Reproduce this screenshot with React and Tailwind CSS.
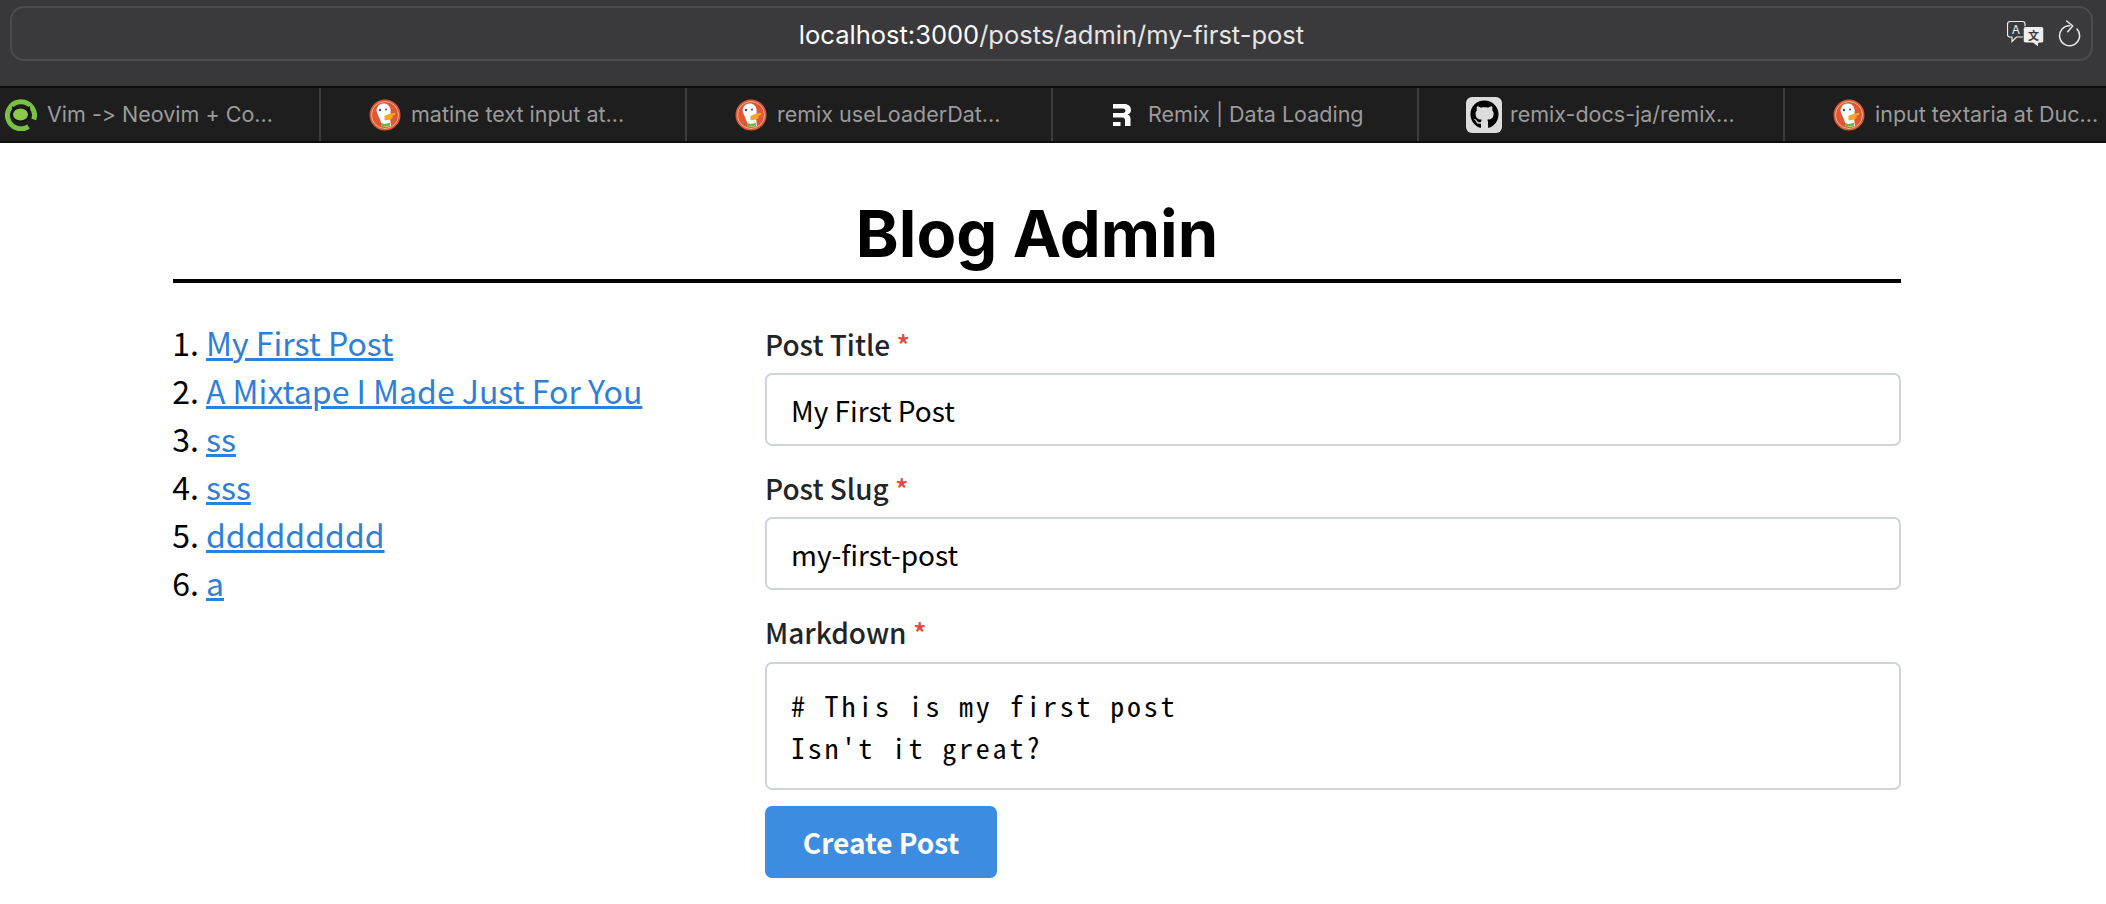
import { FaGithub } from "react-icons/fa";

const tabs = [
  { icon: "vim", text: "Vim -> Neovim + Co...", cls: "pl-[50px] gap-[10px]" },
  { icon: "duck", text: "matine text input at...", cls: "pl-[48px] gap-[10px]" },
  { icon: "duck", text: "remix useLoaderDat...", cls: "pl-[48px] gap-[10px]" },
  { icon: "remix", text: "Remix | Data Loading", cls: "pl-[60px] gap-[17px]" },
  { icon: "github", text: "remix-docs-ja/remix...", cls: "pl-[47px] gap-[8px]" },
  { icon: "duck", text: "input textaria at Duc...", cls: "pl-[48px] gap-[10px]" },
];

const posts = ["My First Post", "A Mixtape I Made Just For You", "ss", "sss", "ddddddddd", "a"];

function DuckIcon() {
  return (
    <svg width="32" height="32" viewBox="0 0 32 32" className="shrink-0">
      <circle cx="16" cy="16" r="15.5" fill="#de5833" />
      <circle cx="16" cy="16" r="13.500" fill="none" stroke="#f2b8a3" strokeWidth="0.9" />
      <path d="M8 9c1.500-3.500 4-4.500 7-4.500 3.500 0 6 2.500 6.500 6 .5 4-.5 6-.5 9l1 7.500c-2 .8-6 .8-8.500 0-1-3-2.500-6-3.800-9.500C8 14 7 12 8 9z" fill="#fff" />
      <circle cx="11" cy="11" r="1.200" fill="#2d4f8e" />
      <circle cx="17" cy="10.500" r="1" fill="#2d4f8e" />
      <path d="M15.500 17c3-1.500 8-3.500 11-3 .5 1.500-1.500 2.500-3.500 3 1 .5 1 1.500 0 2.500-2.500 1.500-6 2-7.500 1.500z" fill="#f5a623" />
      <path d="M12 24l4 1 5-1.200v4l-5-.8-4 1z" fill="#65bc46" />
    </svg>
  );
}

function VimIcon() {
  return (
    <svg width="32" height="32" viewBox="0 0 32 32" className="shrink-0">
      <path d="M23.500 27.500A13.500 13.500 0 1 1 28.800 20.500" fill="none" stroke="#7ac143" strokeWidth="5" />
      <path d="M7 7l4 2.500c3-1 7-1 10 0l4-2.500v8c0 5-4 8-9 8s-9-3-9-8z" fill="#111" />
      <ellipse cx="15.500" cy="15.500" rx="7.500" ry="6" fill="#8cc84b" />
    </svg>
  );
}

function RemixIcon() {
  return (
    <svg width="18" height="22" viewBox="0 0 18 22" className="shrink-0">
      <path d="M0 0H11C15.500 0 18 2.500 18 6C18 8.500 16.500 10 14.500 10.500C16.500 11 17.500 12.500 17.500 15V22H12V16C12 14.500 11 13.500 9.500 13.500H0V9H10C11.500 9 12.500 8 12.500 6.800C12.500 5.500 11.500 4.500 10 4.500H0Z" fill="#fff" />
      <path d="M0 18H7.500V22H0Z" fill="#fff" />
    </svg>
  );
}

function GithubIcon() {
  return (
    <div className="flex h-[36px] w-[36px] shrink-0 items-center justify-center rounded-[6px] bg-[#dcdcdc]">
      <FaGithub size={29} color="#000" />
    </div>
  );
}

function TabIcon({ name }) {
  if (name === "vim") return <VimIcon />;
  if (name === "duck") return <DuckIcon />;
  if (name === "remix") return <RemixIcon />;
  return <GithubIcon />;
}

function TranslateIcon() {
  return (
    <svg width="38" height="28" viewBox="0 0 38 28" className="shrink-0">
      <path d="M3 1.500h12.500c1.500 0 2.500 1 2.500 2.500v10.500c0 1.500-1 2.500-2.500 2.500H9.500L5 21.500V17H3c-1.500 0-2.500-1-2.500-2.500V4C.5 2.500 1.500 1.500 3 1.500z" fill="#3a3a3c" stroke="#eee" strokeWidth="1.200" />
      <text x="9" y="13.500" fontSize="12" fill="#eee" textAnchor="middle" fontFamily="Inter, sans-serif">A</text>
      <path d="M19 6.500h15c1.800 0 2.800 1 2.800 2.800v11c0 1.800-1 2.800-2.800 2.800h-2.500v4.200L26 23H19c-1.800 0-2.800-1-2.800-2.800v-11c0-1.800 1-2.700 2.800-2.700z" fill="#eee" stroke="#3a3a3c" strokeWidth="1" />
      <text x="26.500" y="19.500" fontSize="11" fontWeight="700" fill="#3a3a3c" textAnchor="middle" fontFamily="Noto Sans CJK SC, sans-serif">文</text>
    </svg>
  );
}

function ReloadIcon() {
  return (
    <svg width="24" height="28" viewBox="0 0 24 28" fill="none" stroke="#e8e8e8" strokeWidth="1.500" strokeLinecap="round" strokeLinejoin="round" className="shrink-0">
      <path d="M19 9A10 10 0 1 1 11.700 5.700" />
      <path d="M8.700 1l6 5-5 5.700" />
    </svg>
  );
}

function Label({ children }) {
  return (
    <label className="block text-[28px] leading-[44px] font-medium text-[#212529]">
      {children} <span className="text-[#e5483f]">*</span>
    </label>
  );
}

export default function App() {
  return (
    <div className="min-h-screen overflow-hidden bg-white font-['Noto_Sans_CJK_JP','Noto_Sans',sans-serif] text-black">
      {/* browser toolbar */}
      <div className="h-[86px] bg-[#38383a] pl-[10px] pr-[13px] pt-[6px]">
        <div className="relative flex h-[55px] items-center justify-center rounded-[14px] border-2 border-[#4c4c4e] bg-[#3a3a3c]">
          <span className="pt-[4px] font-['Inter',sans-serif] text-[25.500px] text-[#e6e6e6]">
            <span className="text-white">localhost:3000</span>/posts/admin/my-first-post
          </span>
          <div className="absolute right-[9px] top-[12px] flex items-start gap-[13px]">
            <TranslateIcon />
            <ReloadIcon />
          </div>
        </div>
      </div>

      {/* tab strip */}
      <div className="h-[57px] overflow-hidden border-y-2 border-y-[#0d0d0d] bg-[#1e1e1e]">
        <div className="-ml-[45px] flex h-full w-[2400px]">
          {tabs.map((tab, i) => (
            <div
              key={i}
              className={`flex h-full w-[366px] shrink-0 items-center border-r-2 border-r-[#3c3c3c] font-['Inter',sans-serif] text-[21.500px] text-[#9b9b9b] [font-variant-ligatures:none] [font-feature-settings:'calt'_0] ${tab.cls}`}
            >
              <TabIcon name={tab.icon} />
              <span className="whitespace-nowrap">{tab.text}</span>
            </div>
          ))}
        </div>
      </div>

      {/* page */}
      <div className="ml-[173px] w-[1728px] pt-[47px]">
        <h1 className="border-b-4 border-b-black pb-[2px] text-center font-['Inter',sans-serif] text-[65px] leading-[87px] font-bold">
          Blog Admin
        </h1>

        <div className="mt-[35px] flex">
          <ol className="w-[592px] shrink-0 list-decimal pl-[33px] text-[32px] leading-[48px]">
            {posts.map((post) => (
              <li key={post}>
                <a className="text-[#2f7fd6] underline" href="#">{post}</a>
              </li>
            ))}
          </ol>

          <div className="flex-1 pt-[4px]">
            <Label>Post Title</Label>
            <input readOnly value="My First Post" className="mt-[7px] block h-[73px] w-full rounded-[7px] border-2 border-[#ced4da] px-[24px] text-[28px] text-black" />
            <div className="mt-[20px]">
              <Label>Post Slug</Label>
            </div>
            <input readOnly value="my-first-post" className="mt-[7px] block h-[73px] w-full rounded-[7px] border-2 border-[#ced4da] px-[24px] text-[28px] text-black" />
            <div className="mt-[20px]">
              <Label>Markdown</Label>
            </div>
            <textarea
              readOnly
              rows={2}
              value={"# This is my first post\nIsn't it great?"}
              className="mt-[8px] block h-[128px] w-full resize-none rounded-[7px] border-2 border-[#ced4da] px-[24px] py-[20px] font-['Noto_Sans_Mono_CJK_JP','DejaVu_Sans_Mono',monospace] text-[28px] leading-[42px] tracking-[2.800px] text-black"
            />
            <button className="mt-[16px] block h-[72px] w-[232px] rounded-[7px] bg-[#3c8de2] text-[28px] font-bold text-white">
              Create Post
            </button>
          </div>
        </div>
      </div>
    </div>
  );
}
